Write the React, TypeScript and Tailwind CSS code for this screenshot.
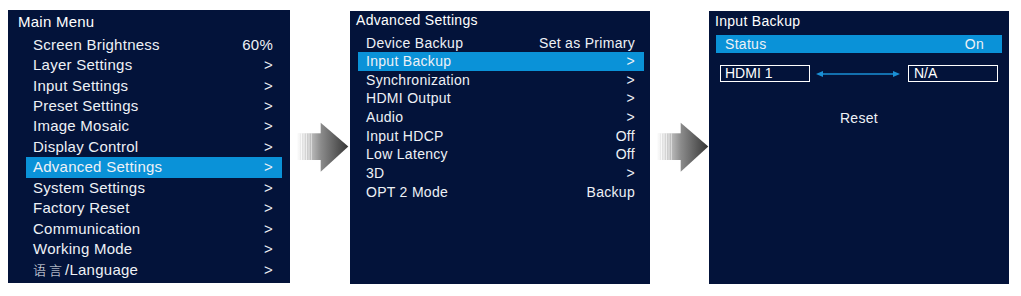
import React from "react";

const FONT = { fontFamily: '"Liberation Sans", Arial, "Noto Sans CJK SC", sans-serif' };

function Arrow({ id, w }: { id: string; w: number }) {
  const stripes = [8.5, 11, 13.5, 16, 18.5, 21];
  return (
    <div className="shrink-0" style={{ width: w }}>
      <svg width={w} height={296} viewBox={`0 0 ${w} 296`}>
        <defs>
          <linearGradient id={`${id}s`} x1="0" x2="1" y1="0" y2="0">
            <stop offset="0" stopColor="#f6f6f6" />
            <stop offset="0.5" stopColor="#c4c4c4" />
            <stop offset="1" stopColor="#8a8a8a" />
          </linearGradient>
          <linearGradient id={`${id}h`} x1="0" x2="1" y1="0" y2="0">
            <stop offset="0" stopColor="#8c8c8c" />
            <stop offset="1" stopColor="#353535" />
          </linearGradient>
        </defs>
        <rect x={7.7} y={133.3} width={23.5} height={26.7} fill={`url(#${id}s)`} />
        {stripes.map((x, i) => (
          <rect key={i} x={x} y={133.3} width={1} height={26.7} fill="#ffffff" opacity={0.85 - i * 0.08} />
        ))}
        <polygon points="30.7,122.7 58.3,146.5 30.7,171.7" fill={`url(#${id}h)`} />
      </svg>
    </div>
  );
}

function Row({ label, value, active, cls }: { label: React.ReactNode; value: string; active?: boolean; cls: string }) {
  return (
    <div className={`${cls} flex items-center justify-between ${active ? "bg-[#0a92d8]" : ""}`}>
      <span>{label}</span>
      <span>{value}</span>
    </div>
  );
}

export default function App() {
  const main: [React.ReactNode, string][] = [
    ["Screen Brightness", "60%"],
    ["Layer Settings", ">"],
    ["Input Settings", ">"],
    ["Preset Settings", ">"],
    ["Image Mosaic", ">"],
    ["Display Control", ">"],
    ["Advanced Settings", ">"],
    ["System Settings", ">"],
    ["Factory Reset", ">"],
    ["Communication", ">"],
    ["Working Mode", ">"],
    [
      <span>
        <span className="text-[13px] tracking-[3px] font-light" style={{ fontFamily: '"Noto Sans CJK SC", sans-serif' }}>
          语言
        </span>
        /Language
      </span>,
      ">",
    ],
  ];
  const adv: [string, string][] = [
    ["Device Backup", "Set as Primary"],
    ["Input Backup", ">"],
    ["Synchronization", ">"],
    ["HDMI Output", ">"],
    ["Audio", ">"],
    ["Input HDCP", "Off"],
    ["Low Latency", "Off"],
    ["3D", ">"],
    ["OPT 2 Mode", "Backup"],
  ];
  return (
    <div className="w-[1021px] h-[296px] bg-white flex items-start pl-[8px] text-[#eef1f6]" style={FONT}>
      {/* Panel 1 */}
      <div className="shrink-0 w-[282px] h-[273px] mt-[10px] bg-[#03133a] text-[15px] tracking-[0.25px]">
        <div className="pl-[10px] h-[24px] leading-[24px] text-white">Main Menu</div>
        <div className="ml-[18px] mr-[8px] mt-[0.75px]">
          {main.map(([l, v], i) => (
            <Row key={i} label={l} value={v} active={i === 6} cls="h-[20.45px] pl-[7px] pr-[9px]" />
          ))}
        </div>
      </div>
      <Arrow id="a1" w={60} />
      {/* Panel 2 */}
      <div className="shrink-0 w-[300px] h-[273px] mt-[11px] bg-[#03133a] text-[14px] tracking-[0.3px]">
        <div className="pl-[6px] h-[19.5px] leading-[19.5px] text-white">Advanced Settings</div>
        <div className="ml-[8px] mr-[6px] mt-[3.2px]">
          {adv.map(([l, v], i) => (
            <Row key={i} label={l} value={v} active={i === 1} cls="h-[18.625px] pl-[8px] pr-[9px]" />
          ))}
        </div>
      </div>
      <Arrow id="a2" w={59} />
      {/* Panel 3 */}
      <div className="shrink-0 w-[300px] h-[273px] mt-[11px] bg-[#03133a] text-[14px] tracking-[0.3px]">
        <div className="pl-[6px] h-[20px] leading-[20px] text-white">Input Backup</div>
        <div className="mt-[4px] mx-[7px] h-[18px] bg-[#0a92d8] flex items-center justify-between pl-[9px] pr-[18px]">
          <span>Status</span>
          <span>On</span>
        </div>
        <div className="mt-[12px] flex items-center pl-[11px]">
          <div className="w-[90px] h-[17px] border-[1.5px] border-white flex items-center pl-[4px] text-white tracking-normal">
            HDMI 1
          </div>
          <div className="ml-[6px] w-[84px] h-[17px] flex items-center">
            <svg width="84" height="10" viewBox="0 0 84 10">
              <line x1="4" y1="5" x2="80" y2="5" stroke="#1a90d6" strokeWidth="1.6" />
              <polygon points="0,5 7,2 7,8" fill="#1a90d6" />
              <polygon points="84,5 77,2 77,8" fill="#1a90d6" />
            </svg>
          </div>
          <div className="ml-[8px] w-[90px] h-[17px] border-[1.5px] border-white flex items-center pl-[5px] text-white tracking-normal">
            N/A
          </div>
        </div>
        <div className="mt-[26px] h-[20px] leading-[20px] text-center">Reset</div>
      </div>
    </div>
  );
}
